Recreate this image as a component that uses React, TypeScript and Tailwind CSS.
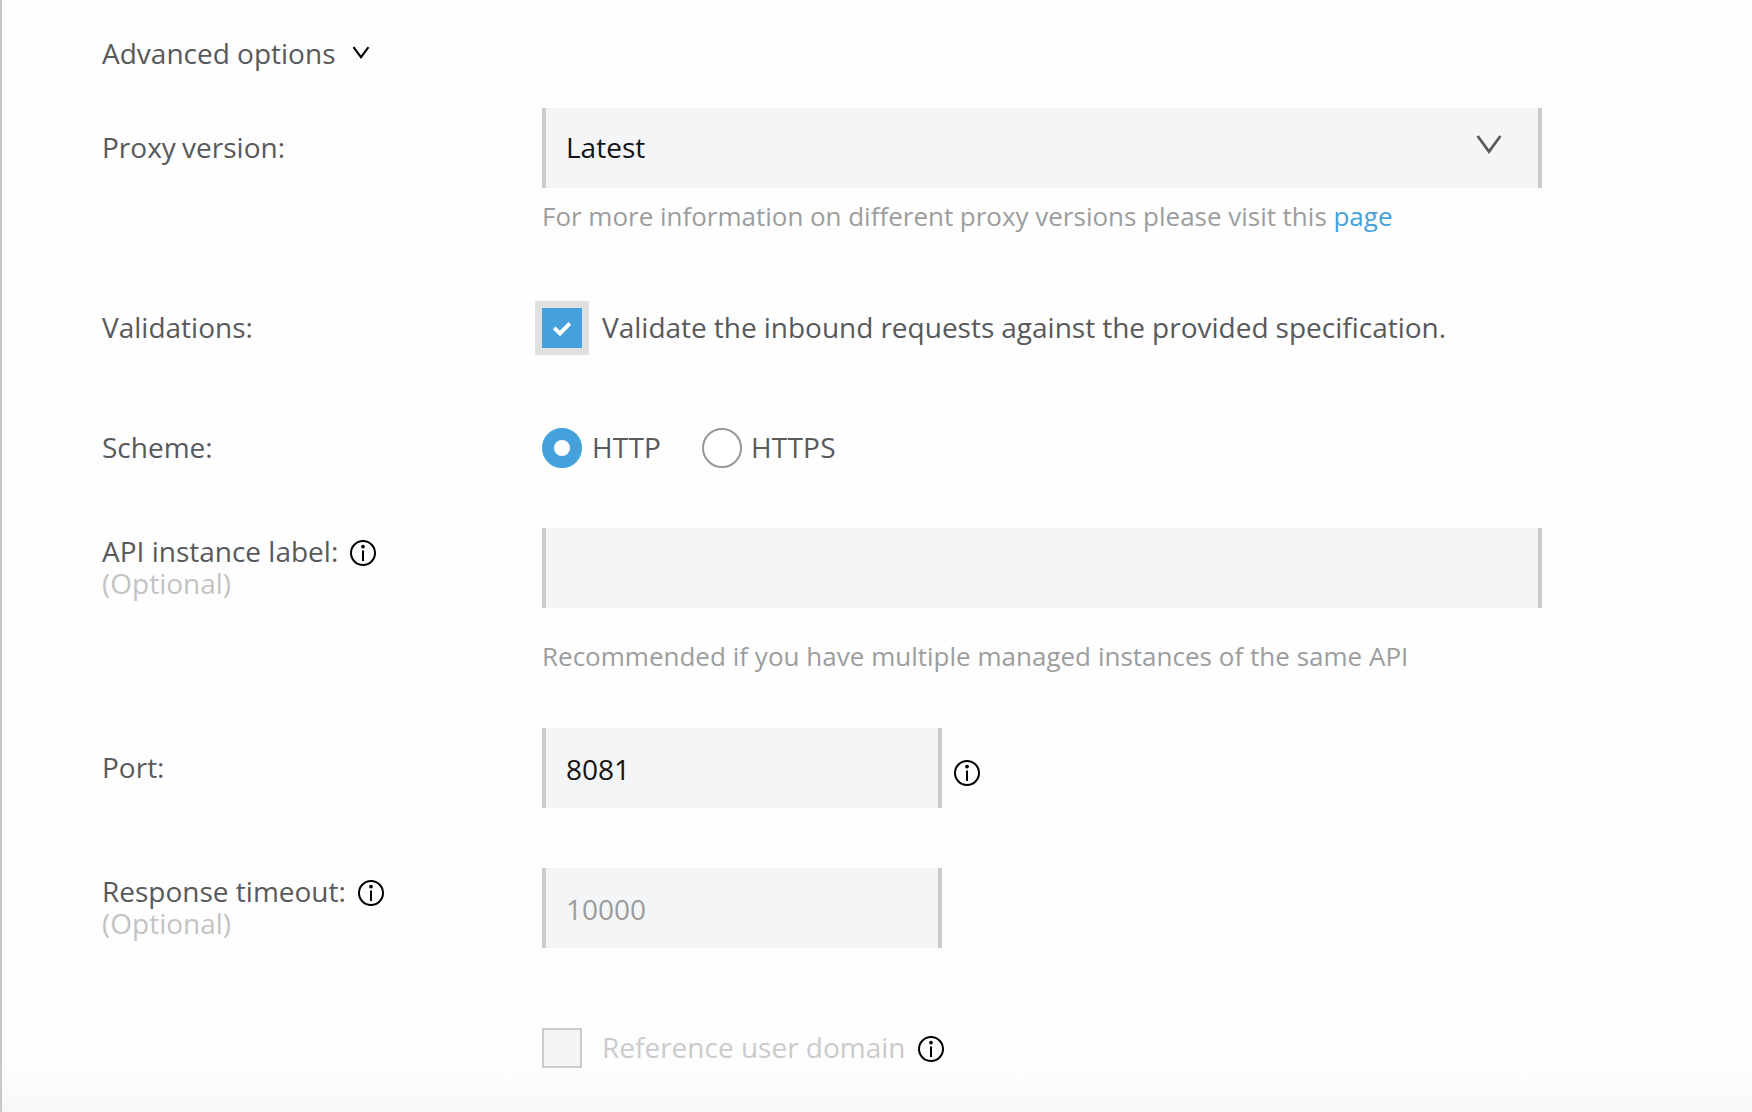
import React from 'react';

function InfoIcon({ className = '' }: { className?: string }) {
  return (
    <svg viewBox="0 0 26 26" className={`h-[26px] w-[26px] shrink-0 ${className}`} fill="none">
      <circle cx="13" cy="13" r="12" stroke="#000" strokeWidth="2" />
      <circle cx="13" cy="6.6" r="1.9" fill="#000" />
      <path d="M13 10.5v10.5" stroke="#000" strokeWidth="2" />
    </svg>
  );
}

function Row({ label, optional, info, labelClass = '', children, className = '' }: {
  label?: string;
  optional?: boolean;
  info?: boolean;
  labelClass?: string;
  className?: string;
  children: React.ReactNode;
}) {
  return (
    <div className={`flex items-start ${className}`}>
      <div className={`w-[440px] shrink-0 ${labelClass}`}>
        {label && (
          <div className="flex h-8 items-start">
            <span>{label}</span>
            {info && <InfoIcon className="mt-[5px] ml-3" />}
          </div>
        )}
        {optional && <div className="text-[#c3c3c3]">(Optional)</div>}
      </div>
      <div>{children}</div>
    </div>
  );
}

const field = 'flex h-20 items-start border-x-4 border-[#cacbcc] bg-[#f4f5f7] pl-5';

export default function App() {
  return (
    <main className="flex h-[1112px] w-[1752px] flex-col overflow-hidden border-l-2 border-[#c8c8c8] bg-[linear-gradient(to_bottom,#fefefe_1050px,#fcfcfc_1085px,#f7f7f7_1112px)] pl-[100px] font-['Open_Sans',sans-serif] text-[28px] leading-8 whitespace-nowrap text-[#58595a]">
      <div className="flex h-[108px] shrink-0 pt-[37px]">
        <span>Advanced options</span>
        <svg viewBox="0 0 18 14" className="mt-[9px] ml-[17px] h-[14px] w-[18px]" fill="none">
          <path d="M1.5 1.2L9 11.2L16.5 1.2" stroke="#000" strokeWidth="2.1" />
        </svg>
      </div>

      <Row label="Proxy version:" labelClass="pt-[23px] [word-spacing:-1px]" className="h-[193px] shrink-0">
        <div className={`${field} w-[1000px] justify-between pt-[23px] text-[#121314]`}>
          <span>Latest</span>
          <svg viewBox="0 0 26 20" className="mt-[4px] mr-[36px] h-5 w-[26px]" fill="none">
            <path d="M1.6 1L13 16.6L24.4 1" stroke="#58595a" strokeWidth="2.7" />
          </svg>
        </div>
        <p className="mt-3 text-[26px] text-[#9c9d9d] [word-spacing:-0.12px]">
          For more information on different proxy versions please visit this{' '}
          <a href="#" className="text-[#45a1db]">page</a>
        </p>
      </Row>

      <Row label="Validations:" labelClass="pt-[10px]" className="h-[127px] shrink-0">
        <label className="-ml-[7px] flex items-start">
          <span className="flex h-[54px] w-[54px] items-center justify-center border-[7px] border-[#e0e0e0] bg-[#45a1db]">
            <svg viewBox="0 0 40 40" className="h-10 w-10" fill="none">
              <path d="M12.2 19.9L18 25.4L27.8 15.4" stroke="#fff" strokeWidth="4" />
            </svg>
          </span>
          <span className="mt-[10px] ml-[13px] [word-spacing:-0.25px]">Validate the inbound requests against the provided specification.</span>
        </label>
      </Row>

      <Row label="Scheme:" labelClass="pt-[3px]" className="h-[100px] shrink-0">
        <div className="flex h-10 items-start">
          <span className="h-10 w-10 rounded-full border-[12px] border-[#45a1db] bg-white" />
          <span className="mt-[3px] ml-[10px] w-[110px] tracking-[0.2px]">HTTP</span>
          <span className="h-10 w-10 rounded-full border-2 border-[#979797] bg-white" />
          <span className="mt-[3px] ml-[9px] tracking-[0.2px]">HTTPS</span>
        </div>
      </Row>

      <Row label="API instance label:" info optional labelClass="pt-[7px]" className="h-[200px] shrink-0">
        <div className={`${field} w-[1000px]`} />
        <p className="mt-8 text-[26px] text-[#9c9d9d] [word-spacing:0.1px]">Recommended if you have multiple managed instances of the same API</p>
      </Row>

      <Row label="Port:" labelClass="pt-[23px]" className="h-[140px] shrink-0">
        <div className="flex">
          <div className={`${field} w-[400px] pt-[25px] text-[#121314]`}>8081</div>
          <InfoIcon className="mt-8 ml-3" />
        </div>
      </Row>

      <Row label="Response timeout:" info optional labelClass="pt-[7px]" className="h-[160px] shrink-0">
        <div className={`${field} w-[400px] pt-[25px] text-[#9c9d9d]`}>10000</div>
      </Row>

      <Row>
        <div className="flex items-start">
          <span className="h-10 w-10 border-2 border-[#cacbcc] bg-[#f4f5f7]" />
          <span className="mt-[3px] ml-5 text-[#cacbcc]">Reference user domain</span>
          <InfoIcon className="mt-2 ml-3" />
        </div>
      </Row>
    </main>
  );
}
